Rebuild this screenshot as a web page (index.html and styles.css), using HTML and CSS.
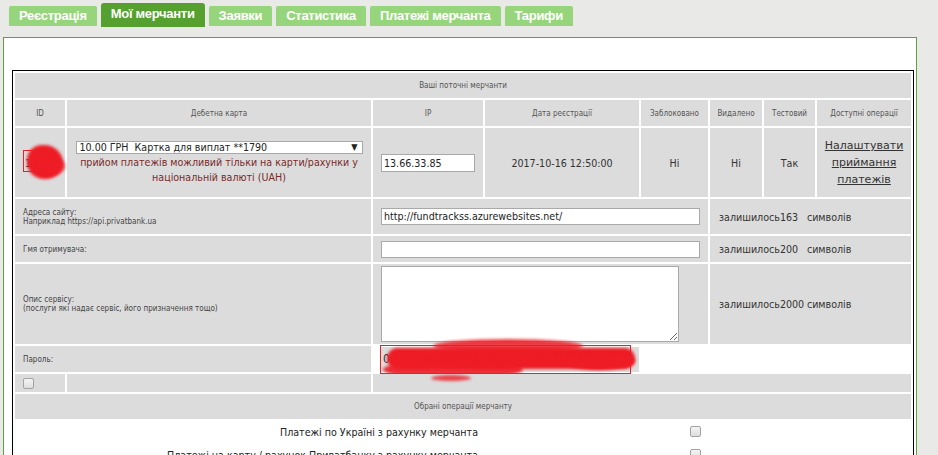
FILE: index.html
```html
<!DOCTYPE html>
<html lang="uk">
<head>
<meta charset="utf-8">
<title>Мої мерчанти</title>
<link rel="stylesheet" href="styles.css">
</head>
<body>
<nav class="tabs">
  <a class="tab">Реєстрація</a>
  <a class="tab active">Мої мерчанти</a>
  <a class="tab">Заявки</a>
  <a class="tab">Статистика</a>
  <a class="tab">Платежі мерчанта</a>
  <a class="tab">Тарифи</a>
</nav>
<main class="panel">
  <table class="merchants">
    <colgroup>
      <col class="c-id"><col class="c-card"><col class="c-ip"><col class="c-date">
      <col class="c-blk"><col class="c-del"><col class="c-test"><col class="c-ops">
    </colgroup>
    <tr class="r-title"><td colspan="8" class="small">Ваші поточні мерчанти</td></tr>
    <tr class="r-head">
      <td class="small">ID</td>
      <td class="small">Дебетна карта</td>
      <td class="small">IP</td>
      <td class="small">Дата реєстрації</td>
      <td class="small">Заблоковано</td>
      <td class="small">Видалено</td>
      <td class="small">Тестовий</td>
      <td class="small">Доступні операції</td>
    </tr>
    <tr class="r-data">
      <td class="id-cell">
        <span class="id-num">1</span>
        <span class="redbox id-box"></span>
        <span class="scribble s-id1"></span>
        <span class="scribble s-id2"></span>
      </td>
      <td>
        <div class="select"><span>10.00 ГРН&nbsp; Картка для виплат **1790</span><span class="arrow">▼</span></div>
        <p class="note">прийом платежів можливий тільки на карти/рахунки у<br>національній валюті (UAH)</p>
      </td>
      <td class="left-pad"><div class="field ip">13.66.33.85</div></td>
      <td>2017-10-16 12:50:00</td>
      <td>Ні</td>
      <td>Ні</td>
      <td>Так</td>
      <td><a class="op-link">Налаштувати приймання платежів</a></td>
    </tr>
    <tr class="r-site">
      <td colspan="2" class="label small">Адреса сайту:<br>Наприклад https://api.privatbank.ua</td>
      <td colspan="3" class="left-pad"><div class="field wide">http://fundtrackss.azurewebsites.net/</div></td>
      <td colspan="3" class="left-pad2">залишилось<span class="cnt">163</span>символів</td>
    </tr>
    <tr class="r-name">
      <td colspan="2" class="label small">Гмя отримувача:</td>
      <td colspan="3" class="left-pad"><div class="field wide"></div></td>
      <td colspan="3" class="left-pad2">залишилось<span class="cnt">200</span>символів</td>
    </tr>
    <tr class="r-desc">
      <td colspan="2" class="label small">Опис сервісу:<br>(послуги які надає сервіс, його призначення тощо)</td>
      <td colspan="3" class="left-pad"><textarea class="area"></textarea></td>
      <td colspan="3" class="left-pad2">залишилось<span class="cnt">2000</span>символів</td>
    </tr>
    <tr class="r-pass">
      <td colspan="2" class="label small">Пароль:</td>
      <td colspan="6" class="plain pass-cell">
        <div class="pass-input">0</div>
        <span class="redbox pass-box"></span>
        <span class="scribble s-p1"></span>
        <span class="scribble s-p2"></span>
        <span class="scribble s-p3"></span>
        <span class="scribble s-p4"></span>
      </td>
    </tr>
    <tr class="r-check">
      <td class="label"><input type="checkbox" class="cb row-cb"></td>
      <td></td>
      <td colspan="6" class="check-rest"><span class="scribble s-p5"></span></td>
    </tr>
    <tr class="r-title"><td colspan="8" class="small">Обрані операції мерчанту</td></tr>
    <tr class="r-op">
      <td colspan="8" class="plain">
        <div class="op-line"><span class="op-name">Платежі по Україні з рахунку мерчанта</span><input type="checkbox" class="cb"></div>
      </td>
    </tr>
    <tr class="r-op">
      <td colspan="8" class="plain">
        <div class="op-line"><span class="op-name">Платежі на карту / рахунок Приватбанку з рахунку мерчанта</span><input type="checkbox" class="cb"></div>
      </td>
    </tr>
  </table>
</main>
</body>
</html>
```
FILE: styles.css
```css
* { box-sizing: border-box; }

body {
  margin: 0;
  background: #e9e9e7;
  font-family: "DejaVu Sans Condensed", "DejaVu Sans", sans-serif;
  font-stretch: condensed;
  font-size: 10.6px;
  color: #333;
}

.tabs {
  display: flex;
  align-items: flex-end;
  gap: 4px;
  height: 28px;
  padding-left: 9px;
}

.tab {
  display: block;
  height: 20px;
  margin-bottom: 2px;
  padding: 0 10px;
  background: #97d57c;
  color: #fff;
  font-family: "Liberation Sans", Arial, sans-serif;
  font-stretch: normal;
  font-weight: bold;
  font-size: 13px;
  letter-spacing: -0.3px;
  line-height: 20px;
  border-radius: 2px 2px 0 0;
  text-decoration: none;
}

.tab.active {
  height: 24px;
  margin-bottom: 1px;
  line-height: 22px;
  background: #55a02e;
  border-radius: 3px 3px 0 0;
}

.panel {
  display: block;
  margin: 9px 0 0 3px;
  width: 914px;
  min-height: 460px;
  background: #fff;
  border: 1px solid #62a03f;
  padding: 32px 0 0 8px;
}

.merchants {
  table-layout: fixed;
  width: 902px;
  border: 1px solid #000;
  border-collapse: separate;
  border-spacing: 2px;
}

.c-id { width: 50px; }
.c-card { width: 304px; }
.c-ip { width: 110px; }
.c-date { width: 154px; }
.c-blk { width: 67px; }
.c-del { width: 52px; }
.c-test { width: 51px; }
.c-ops { width: 94px; }

.merchants td {
  padding: 0;
  background: #dcdcdc;
  text-align: center;
  vertical-align: middle;
  font-size: 10.6px;
  color: #333;
}

.merchants td.small {
  font-size: 8px;
  line-height: 9px;
  color: #555;
}

.merchants td.label {
  text-align: left;
  padding-left: 8px;
  color: #444;
}

.merchants td.plain { background: #fff; }

.r-title td { height: 25px; }
.r-head td { height: 26px; }
.r-data td { height: 69px; }
.r-site td { height: 35px; }
.r-name td { height: 26px; }
.r-desc td { height: 80px; }
.r-pass td { height: 26px; }
.r-check td { height: 18px; }
.r-op td { height: 21px; }

.merchants td.left-pad { text-align: left; padding-left: 8px; }
.merchants td.left-pad2 { text-align: left; padding-left: 9px; }

.cnt { display: inline-block; width: 27px; }

.id-cell { position: relative; }
.merchants td.id-cell { text-align: left; padding-left: 10px; }

.select {
  display: flex;
  justify-content: space-between;
  align-items: center;
  width: 287px;
  height: 13px;
  margin: 0 auto;
  padding: 0 4px 0 3px;
  background: #fff;
  border: 1px solid #a9a9a9;
  font-size: 10.6px;
  line-height: 11px;
  color: #222;
}

.arrow { font-size: 9px; color: #222; }

.note {
  margin: 1px 0 0;
  line-height: 15px;
  color: #7a2b2b;
}

.field {
  height: 17px;
  border: 1px solid #a9a9a9;
  background: #fff;
  padding: 0 2px;
  line-height: 15px;
  color: #222;
  text-align: left;
}

.field.ip { width: 94px; height: 18px; line-height: 16px; }
.field.wide { width: 319px; }

.area {
  display: block;
  width: 298px;
  height: 76px;
  margin: 0;
  border: 1px solid #a9a9a9;
  background: #fff;
}

.op-link {
  display: block;
  padding: 0 3px;
  font-family: "DejaVu Sans", sans-serif;
  font-stretch: normal;
  font-size: 11px;
  line-height: 17px;
  color: #333;
  text-decoration: underline;
}

.pass-cell { position: relative; }
.merchants td.pass-cell { text-align: left; padding-left: 7px; }

.pass-input {
  width: 259px;
  height: 25px;
  background: #dcdcdc;
  padding-left: 3px;
  line-height: 25px;
  font-size: 12px;
  color: #333;
}

.redbox {
  position: absolute;
  border: 1px solid #e8202a;
}

.id-box { left: 8px; top: 22px; width: 24px; height: 22px; }
.pass-box { left: 7px; top: -1px; width: 251px; height: 29px; }

.scribble {
  position: absolute;
  background: #ee1c25;
  border-radius: 50%;
  filter: blur(1.5px);
}

.s-id1 { left: 12px; top: 17px; width: 36px; height: 34px; border-radius: 45% 55% 50% 50%; }
.s-id2 { left: 20px; top: 28px; width: 30px; height: 20px; opacity: 0.8; }

.s-p1 { left: 14px; top: 2px; width: 248px; height: 21px; border-radius: 10px; }
.s-p2 { left: 60px; top: -7px; width: 150px; height: 14px; opacity: 0.85; }
.s-p3 { left: 10px; top: 14px; width: 140px; height: 19px; opacity: 0.9; }
.s-p4 { left: 190px; top: 6px; width: 72px; height: 18px; }
.s-p5 { left: 58px; top: 1px; width: 40px; height: 6px; opacity: 0.8; }

.check-rest { position: relative; }

.cb {
  appearance: none;
  -webkit-appearance: none;
  display: block;
  width: 11px;
  height: 11px;
  margin: 0;
  border: 1px solid #a3a3a3;
  border-radius: 2px;
  background: linear-gradient(#f4f4f4, #dedede);
}

.row-cb { margin-top: 1px; }

.op-line {
  display: flex;
  align-items: center;
}

.op-name {
  display: block;
  width: 463px;
  text-align: right;
  font-size: 10.6px;
  color: #222;
}

.op-line .cb { margin-left: 212px; }
```
